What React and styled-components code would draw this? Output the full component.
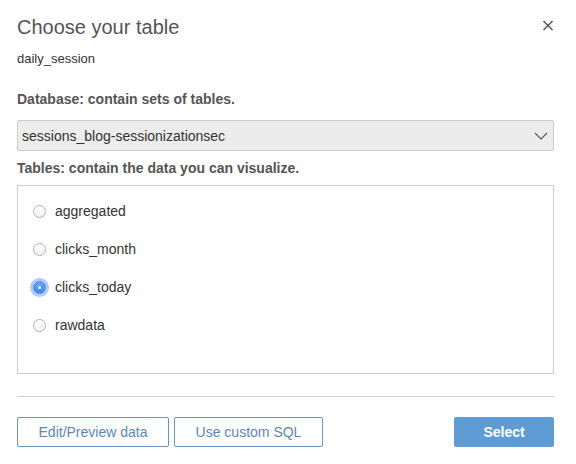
import React from 'react';
import styled, { createGlobalStyle } from 'styled-components';

const GlobalStyle = createGlobalStyle`
  body {
    margin: 0;
    background: #fff;
    font-family: "Liberation Sans", Arial, sans-serif;
  }
`;

const Dialog = styled.div`
  width: 576px;
  height: 464px;
  box-sizing: border-box;
  padding: 15px 22px 0 17px;
  display: flex;
  flex-direction: column;
`;

const Header = styled.div`
  display: flex;
  justify-content: space-between;
  align-items: flex-start;
`;

const Title = styled.h1`
  margin: 0;
  font-size: 20px;
  line-height: 24px;
  font-weight: normal;
  color: #555;
`;

const CloseBtn = styled.button`
  border: none;
  background: none;
  padding: 0;
  margin: 3px -1px 0 0;
  width: 14px;
  height: 14px;
  display: flex;
  align-items: center;
  justify-content: center;
  cursor: pointer;
`;

const SubTitle = styled.div`
  margin-top: 12px;
  font-size: 13px;
  line-height: 16px;
  color: #333;
`;

const FieldLabel = styled.div`
  margin-top: ${(p) => p.gap}px;
  font-size: 14px;
  line-height: 16px;
  font-weight: bold;
  color: #555;
`;

const SelectBox = styled.div`
  margin-top: 13px;
  height: 31px;
  box-sizing: border-box;
  border: 1px solid #ccc;
  border-radius: 2px;
  background: #ececec;
  display: flex;
  align-items: center;
  justify-content: space-between;
  padding: 0 5px 0 4px;
  font-size: 14px;
  color: #333;
`;

const TableList = styled.div`
  margin-top: 9px;
  height: 189px;
  box-sizing: border-box;
  border: 1px solid #ccc;
  padding: 6px 0 0 15px;
  display: flex;
  flex-direction: column;
`;

const RadioRow = styled.label`
  height: 38px;
  display: flex;
  align-items: center;
  gap: 9px;
  font-size: 14px;
  color: #333;
  cursor: pointer;
`;

const RadioDot = styled.span`
  width: 13px;
  height: 13px;
  box-sizing: border-box;
  border-radius: 50%;
  flex: none;
  position: relative;
  ${(p) =>
    p.checked
      ? `
    background: linear-gradient(#6aa6f8, #3f86ee);
    border: 1px solid #3d7fe0;
    box-shadow: 0 0 0 3px rgba(110, 160, 240, 0.55);
    &::after {
      content: '';
      position: absolute;
      left: 4px;
      top: 4px;
      width: 3px;
      height: 3px;
      border-radius: 50%;
      background: #fff;
    }
  `
      : `
    background: linear-gradient(#fff, #f2f2f2);
    border: 1px solid #b3b3b3;
  `}
`;

const Divider = styled.div`
  margin-top: 22px;
  height: 1px;
  background: #d0d0d0;
`;

const Footer = styled.div`
  margin-top: 20px;
  display: flex;
  align-items: center;
  gap: 5px;
`;

const Button = styled.button`
  height: 30px;
  box-sizing: border-box;
  border-radius: 2px;
  font-family: "Liberation Sans", Arial, sans-serif;
  font-size: 14px;
  padding: 0;
  width: ${(p) => p.w}px;
  cursor: pointer;
  ${(p) =>
    p.primary
      ? `
    margin-left: auto;
    background: #5f9bd5;
    border: 1px solid #5f9bd5;
    color: #fff;
    font-weight: bold;
  `
      : `
    background: #fff;
    border: 1px solid #6a95c4;
    color: #5a86b8;
  `}
`;

const tables = ['aggregated', 'clicks_month', 'clicks_today', 'rawdata'];

export default function App() {
  const [selected, setSelected] = React.useState('clicks_today');

  return (
    <>
      <GlobalStyle />
      <Dialog>
        <Header>
          <Title>Choose your table</Title>
          <CloseBtn aria-label="Close">
            <svg width="12" height="11" viewBox="0 0 12 11">
              <path d="M1.5 1 L10.5 10 M10.5 1 L1.5 10" stroke="#555" strokeWidth="1.5" fill="none" />
            </svg>
          </CloseBtn>
        </Header>
        <SubTitle>daily_session</SubTitle>

        <FieldLabel gap={24}>Database: contain sets of tables.</FieldLabel>
        <SelectBox>
          <span>sessions_blog-sessionizationsec</span>
          <svg width="14" height="8" viewBox="0 0 14 8">
            <path d="M1 1 L7 7 L13 1" stroke="#555" strokeWidth="1.1" fill="none" />
          </svg>
        </SelectBox>

        <FieldLabel gap={9}>Tables: contain the data you can visualize.</FieldLabel>
        <TableList>
          {tables.map((t) => (
            <RadioRow key={t} onClick={() => setSelected(t)}>
              <RadioDot checked={selected === t} />
              {t}
            </RadioRow>
          ))}
        </TableList>

        <Divider />
        <Footer>
          <Button w={152}>Edit/Preview data</Button>
          <Button w={149}>Use custom SQL</Button>
          <Button primary w={100}>Select</Button>
        </Footer>
      </Dialog>
    </>
  );
}
